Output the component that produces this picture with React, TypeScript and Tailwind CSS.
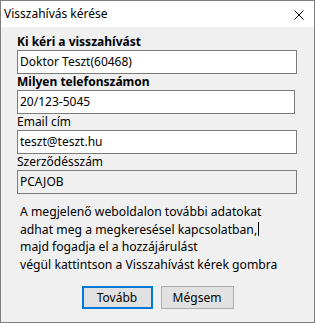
import React from 'react';

const font = { fontFamily: '"Noto Sans", "Open Sans", sans-serif' };

function Field({ label, value, bold, readOnly, w = 'w-[280px]' }: { label: string; value: string; bold?: boolean; readOnly?: boolean; w?: string }) {
  return (
    <div className="flex flex-col">
      <div className={`h-[16px] leading-[16px] text-[12px] text-black ${bold ? 'font-bold' : ''}`}>{label}</div>
      <div
        className={`${w} h-[24px] border border-[#7a7a7a] px-[2px] leading-[22px] text-[12px] text-black ${readOnly ? 'bg-[#f0f0f0]' : 'bg-white'}`}
      >
        {value}
      </div>
    </div>
  );
}

export default function App() {
  return (
    <div style={font} className="w-[315px] h-[323px] flex flex-col border border-[#7f7f7f] bg-[#f0f0f0] overflow-hidden">
      {/* Title bar */}
      <div className="h-[26px] bg-white flex items-center justify-between pl-[3px] pr-[10px] shrink-0">
        <span className="text-[12px] text-black">Visszahívás kérése</span>
        <svg width="10" height="10" viewBox="0 0 10 10" className="mt-[1px]">
          <path d="M0.5 0.5 L9.5 9.5 M9.5 0.5 L0.5 9.5" stroke="#000" strokeWidth="1" />
        </svg>
      </div>

      {/* Body */}
      <div className="flex flex-col pl-[16px] pt-[7px]">
        <Field label="Ki kéri a visszahívást" value="Doktor Teszt(60468)" bold />
        <Field label="Milyen telefonszámon" value="20/123-5045" bold w="w-[278px]" />
        <Field label="Email cím" value="teszt@teszt.hu" />
        <Field label="Szerződésszám" value="PCAJOB" readOnly />

        <div className="mt-[9px] pl-[3px] text-[12.2px] leading-[17.5px] text-black">
          <div>A megjelenő weboldalon további adatokat</div>
          <div className="flex items-center">
            adhat meg a megkeresésel kapcsolatban,
            <span className="inline-block w-px h-[14px] bg-black ml-[1px]" />
          </div>
          <div>majd fogadja el a hozzájárulást</div>
          <div>végül kattintson a Visszahívást kérek gombra</div>
        </div>
      </div>

      {/* Buttons */}
      <div className="flex justify-center gap-[8px] mt-[13px]">
        <button className="w-[71px] h-[23px] border-2 border-[#0078d7] bg-[#e1e1e1] text-[12px] text-black leading-none">
          Tovább
        </button>
        <button className="w-[73px] h-[23px] border border-[#adadad] bg-[#e1e1e1] text-[12px] text-black leading-none">
          Mégsem
        </button>
      </div>
    </div>
  );
}
